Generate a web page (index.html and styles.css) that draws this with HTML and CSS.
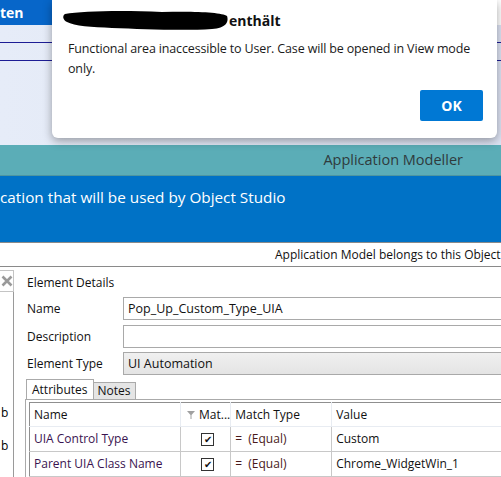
FILE: index.html
```html
<!DOCTYPE html>
<html>
  <head>
    <meta charset="utf-8" />
    <title>Application Modeller</title>
    <link rel="stylesheet" href="styles.css">
  </head>

  <body>
    <!-- 顶部导航 -->
    <div class="topbar">
      <div class="topbar-tab">ten</div>
    </div>
    <div class="nav">
      <div class="nav-item"></div>
      <div class="nav-item"></div>
    </div>

    <!-- 标题栏 -->
    <div class="titlebar">Application Modeller</div>
    <div class="banner">cation that will be used by Object Studio</div>
    <div class="infobar">Application Model belongs to this Object</div>

    <!-- 主体 -->
    <div class="main">
      <div class="side">
        <div class="close-btn">
          <svg width="12" height="12" viewBox="0 0 12 12">
            <path d="M1.5 1.5 L10.5 10.5 M10.5 1.5 L1.5 10.5" stroke="#9a9a9a" stroke-width="2.6" />
          </svg>
        </div>
        <div class="side-panel">
          <div class="side-label side-label-1">b</div>
          <div class="side-label side-label-2">b</div>
        </div>
      </div>

      <div class="content">
        <div class="section-title">Element Details</div>

        <div class="form-row">
          <div class="form-label">Name</div>
          <div class="form-input">Pop_Up_Custom_Type_UIA</div>
        </div>
        <div class="form-row">
          <div class="form-label">Description</div>
          <div class="form-input"></div>
        </div>
        <div class="form-row">
          <div class="form-label">Element Type</div>
          <div class="form-input form-select">UI Automation</div>
        </div>

        <!-- 标签页 -->
        <div class="tabs">
          <div class="tab tab-active">Attributes</div>
          <div class="tab">Notes</div>
        </div>
        <div class="tab-panel">
          <table class="attr-table">
            <tr class="head">
              <th class="col-name">Name</th>
              <th class="col-match">
                <svg class="filter-icon" width="8" height="8" viewBox="0 0 8 8">
                  <path d="M0 0 H8 L4.5 4 V8 H3.5 V4 Z" fill="#a0a0a0" />
                </svg>Mat...
              </th>
              <th class="col-type">Match Type</th>
              <th class="col-value">Value</th>
            </tr>
            <tr>
              <td class="attr-name">UIA Control Type</td>
              <td class="center"><span class="check">&#10004;</span></td>
              <td class="equal">=&nbsp;&nbsp;(Equal)</td>
              <td>Custom</td>
            </tr>
            <tr>
              <td class="attr-name">Parent UIA Class Name</td>
              <td class="center"><span class="check">&#10004;</span></td>
              <td class="equal">=&nbsp;&nbsp;(Equal)</td>
              <td>Chrome_WidgetWin_1</td>
            </tr>
            <tr>
              <td></td><td></td><td></td><td></td>
            </tr>
          </table>
        </div>
      </div>
    </div>

    <!-- 弹出对话框 -->
    <div class="dialog">
      <div class="dialog-title">
        <svg class="redact" width="167" height="22" viewBox="0 0 167 22">
          <path d="M3 4 C20 1 60 0 100 2 C130 1 160 2 165 6 C167 12 164 18 150 19 C120 21 80 19 50 18 C30 17 12 16 5 12 C1 10 0 6 3 4 Z" fill="#000" />
        </svg>
        <span>enthält</span>
      </div>
      <div class="dialog-text">Functional area inaccessible to User. Case will be opened in View mode only.</div>
      <div class="dialog-actions">
        <button class="ok-button">OK</button>
      </div>
    </div>
  </body>
</html>
```

FILE: styles.css
```css
/* 基础样式 */
html,
body {
  margin: 0;
  padding: 0;
  width: 501px;
  height: 477px;
  overflow: hidden;
  position: relative;
  font-family: "Open Sans", "Noto Sans", sans-serif;
  background-color: #fff;
}

/* 顶部导航 */
.topbar {
  height: 25px;
  background-color: #fff;
}
.topbar-tab {
  width: 120px;
  height: 25px;
  background-color: #0766c9;
  color: #fff;
  font-weight: bold;
  font-size: 14px;
  line-height: 25px;
}

.nav {
  height: 120px;
  background: linear-gradient(to right, #e6ecf8, #dde3f3);
}
.nav-item {
  height: 17px;
  border-bottom: 1px solid #1d1d95;
}

/* 标题栏 */
.titlebar {
  height: 30px;
  line-height: 30px;
  border-bottom: 1px solid #4e96a0;
  background-color: #5badb7;
  color: #2f3b3d;
  font-size: 14.5px;
  text-align: right;
  padding-right: 38px;
}

.banner {
  height: 66px;
  background-color: #0072c6;
  color: #fff;
  font-size: 15.3px;
  line-height: 20px;
  padding-top: 11px;
  box-sizing: border-box;
  white-space: nowrap;
}

.infobar {
  height: 23px;
  border-top: 1px solid #8a8a8a;
  border-bottom: 1px solid #8a8a8a;
  line-height: 23px;
  font-size: 12px;
  color: #111;
  padding-left: 275px;
  white-space: nowrap;
  overflow: hidden;
}

/* 主体 */
.main {
  display: flex;
  height: 210px;
}

.side {
  width: 14px;
  flex-shrink: 0;
  display: flex;
  flex-direction: column;
}
.close-btn {
  margin-top: 3px;
  height: 22px;
  border: 1px solid #c4c4c4;
  border-left: none;
  box-sizing: border-box;
  display: flex;
  align-items: center;
  justify-content: center;
}
.side-panel {
  flex: 1;
  border-right: 1px solid #9a9a9a;
  position: relative;
  font-size: 12px;
}
.side-label {
  position: absolute;
  left: 1px;
}
.side-label-1 {
  top: 112px;
}
.side-label-2 {
  top: 145px;
}

.content {
  flex: 1;
  padding-left: 13px;
  font-size: 12px;
  color: #111;
  min-width: 0;
}

.section-title {
  height: 30px;
  line-height: 32px;
}

/* 表单 */
.form-row {
  display: flex;
  align-items: center;
  height: 23px;
  margin-bottom: 4.5px;
}
.form-label {
  width: 96px;
  flex-shrink: 0;
}
.form-input {
  flex: 1;
  height: 23px;
  border: 1px solid #a9a9a9;
  border-right: none;
  box-sizing: border-box;
  padding-left: 4px;
  line-height: 21px;
  font-size: 12.5px;
  white-space: nowrap;
}
.form-select {
  background: linear-gradient(#f0f0f0, #e4e4e4);
}

/* 标签页 */
.tabs {
  display: flex;
  align-items: flex-end;
  height: 19px;
  margin-top: 1px;
  margin-left: -1px;
}
.tab {
  height: 16px;
  line-height: 16px;
  padding: 0 4px;
  border: 1px solid #aaa;
  border-bottom: none;
  background-color: #e5e5e5;
  font-size: 12px;
  margin-left: -1px;
}
.tab-active {
  height: 19px;
  line-height: 19px;
  background-color: #fff;
  padding: 0 5px;
  margin-left: 0;
  position: relative;
  z-index: 1;
}

.tab-panel {
  border-top: 1px solid #aaa;
  border-left: 1px solid #aaa;
  margin-left: -2px;
  padding: 2px 0 0 3px;
  height: 100px;
}

/* 属性表格 */
.attr-table {
  border-collapse: collapse;
  border: 1px solid #8f8f8f;
  width: 500px;
  font-size: 12px;
}
.attr-table th {
  font-weight: normal;
  text-align: left;
  height: 23px;
  padding: 0 0 0 4px;
  border-right: 1px solid #e8ecf2;
  border-bottom: 1px solid #e8ecf2;
  color: #111;
  white-space: nowrap;
}
.attr-table td {
  height: 24px;
  padding: 0 0 0 4px;
  border-right: 1px solid #c8c8c8;
  border-bottom: 1px solid #c8c8c8;
  white-space: nowrap;
  color: #111;
}
.col-name {
  width: 146px;
}
.col-match {
  width: 44px;
}
.col-type {
  width: 96px;
}
.filter-icon {
  margin: 0 4px 0 2px;
}
.attr-name {
  color: #3a1450 !important;
}
.center {
  text-align: center;
}
.check {
  display: inline-block;
  width: 11px;
  height: 11px;
  border: 1px solid #333;
  font-size: 10px;
  line-height: 11px;
  text-align: center;
  color: #111;
}
.equal {
  color: #4a1a1a !important;
}

/* 弹出对话框 */
.dialog {
  position: absolute;
  left: 52px;
  top: 0;
  width: 445px;
  height: 138px;
  background-color: #fff;
  border-radius: 0 0 6px 6px;
  box-shadow: 0 3px 10px rgba(0, 0, 0, 0.35);
  box-sizing: border-box;
  padding: 0 14px 0 16px;
}
.dialog-title {
  display: flex;
  align-items: center;
  height: 34px;
  margin-left: -6px;
  padding-top: 6px;
  box-sizing: border-box;
  font-weight: bold;
  font-size: 14px;
  color: #111;
}
.redact {
  margin-top: 2px;
}
.dialog-text {
  margin-top: 5px;
  font-size: 12.5px;
  letter-spacing: -0.15px;
  line-height: 20px;
  color: #1a1a1a;
  max-width: 412px;
}
.dialog-actions {
  display: flex;
  justify-content: flex-end;
  margin-top: 11px;
}
.ok-button {
  width: 63px;
  height: 31px;
  border: none;
  border-radius: 2px;
  background-color: #0078d4;
  color: #fff;
  font-family: "Open Sans", sans-serif;
  font-weight: bold;
  font-size: 14px;
}
```
